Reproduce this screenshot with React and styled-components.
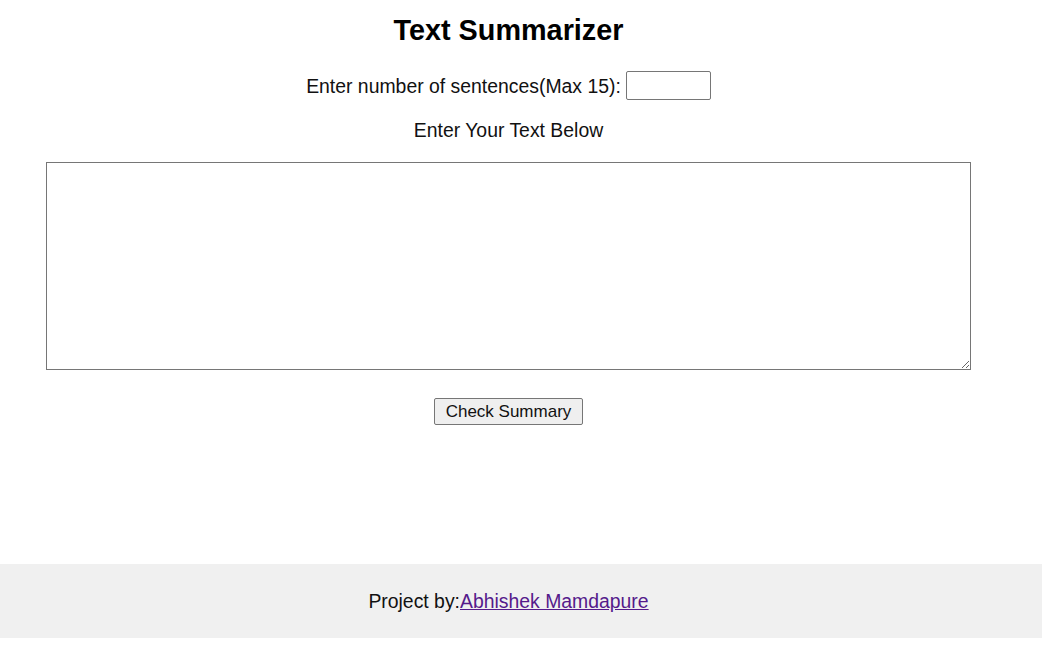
import React, { useState } from "react";
import styled, { createGlobalStyle } from "styled-components";

const GlobalStyle = createGlobalStyle`
  body {
    margin: 0;
    background: #ffffff;
    font-family: "Liberation Sans", Arial, sans-serif;
    color: #000;
  }
`;

const Main = styled.div`
  width: 1017px;
  display: flex;
  flex-direction: column;
  align-items: center;
`;

const Title = styled.h2`
  margin: 13px 0 0;
  font-size: 28.8px;
  line-height: 34px;
  font-weight: bold;
`;

const CountRow = styled.label`
  margin-top: 24px;
  display: flex;
  align-items: center;
  gap: 5px;
  font-size: 19.4px;
  line-height: 22px;
  color: #111;
`;

const CountInput = styled.input`
  box-sizing: border-box;
  width: 85px;
  height: 29px;
  border: 1px solid #767676;
  border-radius: 2px;
  font-size: 16px;
  font-family: inherit;
  padding: 2px 4px;
`;

const Caption = styled.p`
  margin: 19px 0 0;
  font-size: 19.4px;
  line-height: 22px;
  color: #111;
`;

const TextBox = styled.textarea`
  box-sizing: border-box;
  margin-top: 21px;
  width: 925px;
  height: 208px;
  border: 1px solid #767676;
  border-radius: 0;
  font-family: "Liberation Mono", monospace;
  font-size: 16px;
  padding: 3px;
  display: block;
`;

const SubmitButton = styled.button`
  box-sizing: border-box;
  margin-top: 28px;
  width: 149px;
  height: 27px;
  background: #efefef;
  border: 1px solid #767676;
  border-radius: 2px;
  font-family: inherit;
  font-size: 17px;
  color: #111;
  padding: 0;
`;

const Footer = styled.footer`
  margin-top: 139px;
  margin-bottom: 18px;
  height: 74px;
  background: #f0f0f0;
  display: flex;
  align-items: center;
`;

const FooterText = styled.p`
  margin: 0;
  width: 1017px;
  text-align: center;
  font-size: 19.4px;
  color: #111;
`;

const AuthorLink = styled.a`
  color: #551a8b;
  text-decoration: underline;
`;

export default function App() {
  const [count, setCount] = useState("");
  const [text, setText] = useState("");

  return (
    <>
      <GlobalStyle />
      <Main>
        <Title>Text Summarizer</Title>
        <CountRow>
          Enter number of sentences(Max 15):
          <CountInput
            type="text"
            value={count}
            onChange={(e) => setCount(e.target.value)}
          />
        </CountRow>
        <Caption>Enter Your Text Below</Caption>
        <TextBox value={text} onChange={(e) => setText(e.target.value)} />
        <SubmitButton type="button">Check Summary</SubmitButton>
      </Main>
      <Footer>
        <FooterText>
          Project by:<AuthorLink href="#">Abhishek Mamdapure</AuthorLink>
        </FooterText>
      </Footer>
    </>
  );
}
